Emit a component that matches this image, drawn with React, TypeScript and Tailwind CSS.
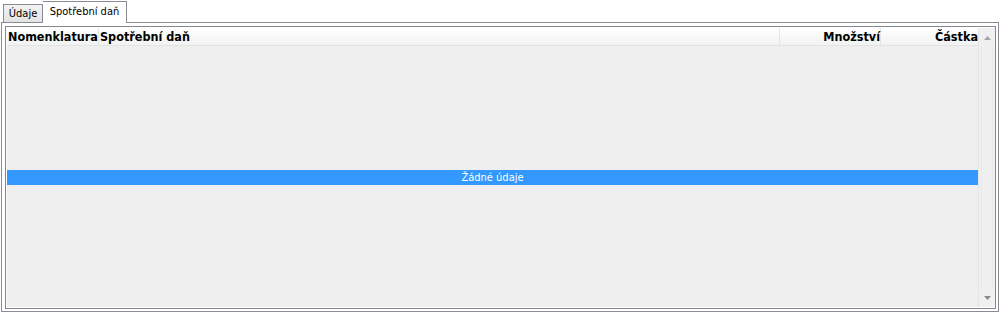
import React from 'react';

const cols = [
  { label: 'Nomenklatura', w: 'w-[92px]', align: 'text-left' },
  { label: 'Spotřební daň', w: 'flex-1', align: 'text-left' },
  { label: 'Množství', w: 'w-[101px]', align: 'text-right' },
  { label: 'Částka', w: 'w-[97px]', align: 'text-right' },
];

function Arrow({ up }: { up?: boolean }) {
  return (
    <svg width="7" height="4" viewBox="0 0 7 4" className="block">
      {up ? <path d="M3.5 0 L7 4 L0 4 Z" fill="#a5a5a5" /> : <path d="M0 0 L7 0 L3.5 4 Z" fill="#8a8a8a" />}
    </svg>
  );
}

export default function App() {
  return (
    <div className="w-[1000px] h-[312px] bg-white flex flex-col font-['DejaVu_Sans_Condensed','DejaVu_Sans',sans-serif] text-[11px] text-black overflow-hidden">
      {/* tabs */}
      <div className="h-[22px] flex items-end pl-[3px] shrink-0">
        <div className="h-[18px] w-[40px] border border-b-0 border-[#898c95] bg-gradient-to-b from-[#f2f2f2] to-[#e3e3e3] flex items-center justify-center leading-none">
          Údaje
        </div>
        <div className="h-[22px] w-[84px] -mb-px relative z-10 border border-b-0 border-[#898c95] border-l-0 bg-white flex items-center justify-center leading-none pb-[2px]">
          Spotřební daň
        </div>
      </div>

      {/* panel */}
      <div className="ml-px mr-px h-[290px] border border-[#898c95] pt-[3px] pl-[3px] pr-[2px] pb-[2px] flex flex-col">
        <div className="flex-1 border border-[#828790] flex flex-col">
          <div className="flex-1 border border-white border-r-0 flex bg-[#efefef]">
            <div className="flex-1 flex flex-col">
              <div className="h-[18px] flex bg-gradient-to-b from-white to-[#f1f2f2] border-b border-[#e2e3e3] font-bold text-[12.5px] leading-none">
                {cols.map((c, i) => (
                  <div
                    key={c.label}
                    className={`${c.w} ${c.align} h-full flex items-center pt-px ${c.align === 'text-right' ? 'justify-end' : 'pl-px'} ${i < 3 ? 'border-r border-[#e5e5e5]' : ''}`}
                  >
                    {c.label}
                  </div>
                ))}
              </div>
              <div className="flex-1 flex flex-col justify-center pt-px">
                <div className="h-[15px] bg-[#3399ff] text-white flex items-center justify-center leading-none">
                  Žádné údaje
                </div>
              </div>
            </div>
            <div className="w-[17px] flex flex-col bg-[#f0f0f0] border-l border-[#e4e4e4]">
              <div className="h-[18px] flex items-center justify-center pt-[1px]">
                <Arrow up />
              </div>
              <div className="flex-1 mx-[2px] border-x border-[#e8e8e8]" />
              <div className="h-[18px] flex items-center justify-center">
                <Arrow />
              </div>
            </div>
          </div>
        </div>
      </div>
    </div>
  );
}
